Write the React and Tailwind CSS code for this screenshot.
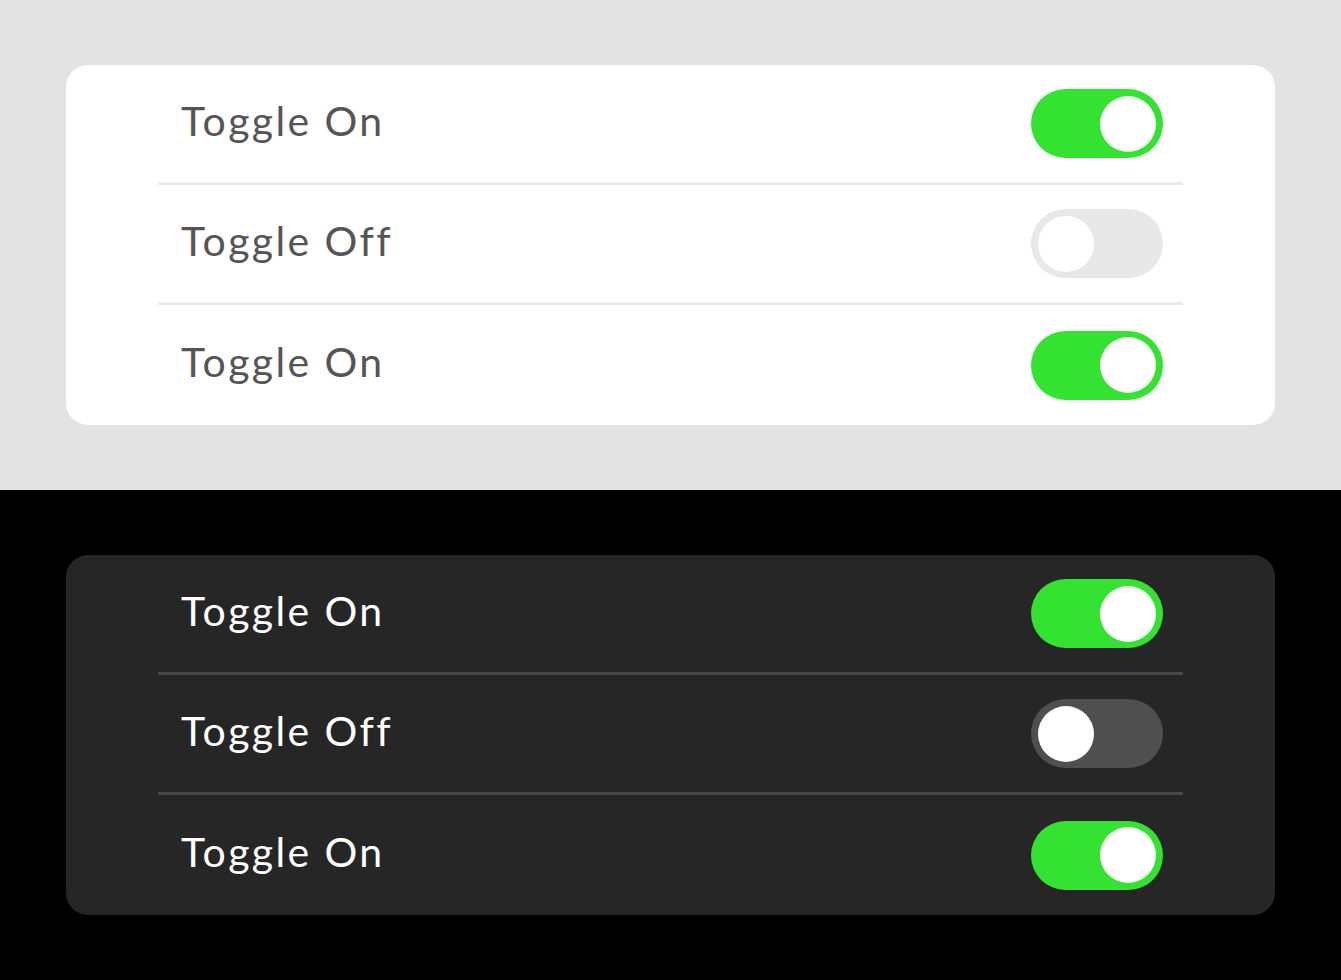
import React from "react";

const rows = [
  { label: "Toggle On", on: true },
  { label: "Toggle Off", on: false },
  { label: "Toggle On", on: true },
];

const Toggle = ({ on, dark }) => {
  const track = on ? "bg-[#34e331]" : dark ? "bg-[#4f4f4f]" : "bg-[#e8e8e8]";
  return (
    <div className={`w-[132px] h-[69px] rounded-full p-[7px] flex items-center ${on ? "justify-end" : "justify-start"} ${track}`}>
      <span className="w-[56px] h-[56px] rounded-full bg-white block" />
    </div>
  );
};

const Panel = ({ dark }) => (
  <div className={`mx-[66px] rounded-[22px] px-[92px] ${dark ? "bg-[#262626]" : "bg-white"}`}>
    {rows.map((row, i) => (
      <div
        key={i}
        className={`h-[120px] flex items-center justify-between pl-[23px] pr-[20px] ${
          i < rows.length - 1 ? (dark ? "border-b-[3px] border-[#474747]" : "border-b-[3px] border-[#ebebeb]") : ""
        }`}
      >
        <span
          className={`text-[41px] tracking-[2.4px] pb-[6px] ${dark ? "text-white" : "text-[#555555]"}`}
          style={{ fontFamily: "Lato, 'Noto Sans', sans-serif" }}
        >
          {row.label}
        </span>
        <Toggle on={row.on} dark={dark} />
      </div>
    ))}
  </div>
);

export default function App() {
  return (
    <div className="w-[1341px] h-[980px] flex flex-col">
      <div className="h-[490px] bg-[#e3e3e3] pt-[65px]">
        <Panel />
      </div>
      <div className="h-[490px] bg-black pt-[65px]">
        <Panel dark />
      </div>
    </div>
  );
}
